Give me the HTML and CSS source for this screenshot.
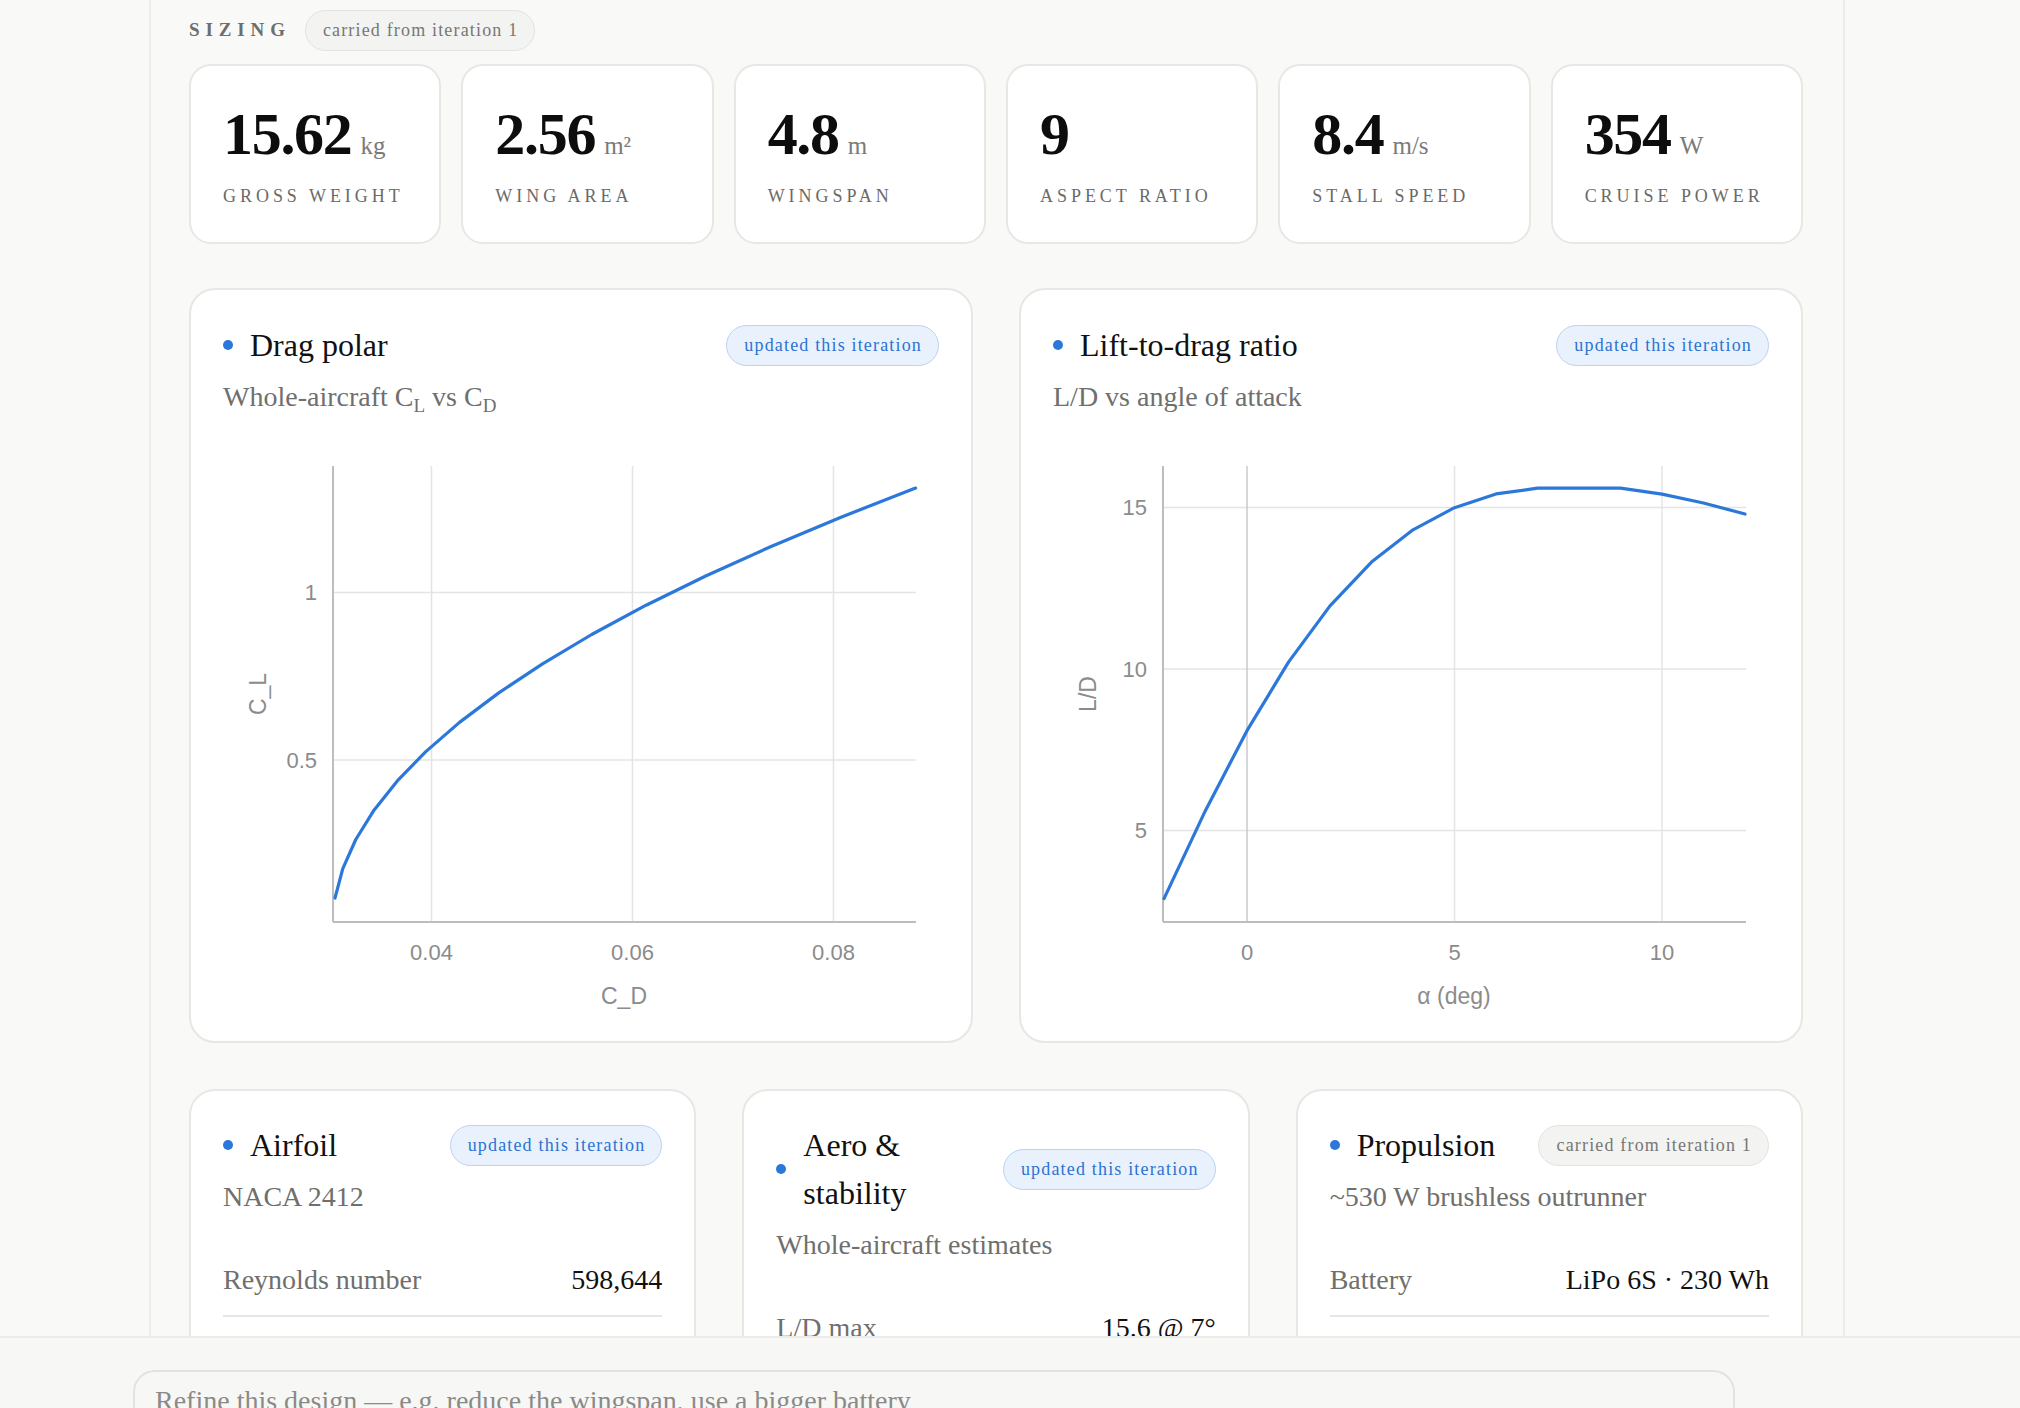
FILE: index.html
```html
<!DOCTYPE html>
<html lang="en">
<head>
<meta charset="utf-8">
<title>Sizing</title>
<link rel="stylesheet" href="styles.css">
</head>
<body>
<main class="page">
  <div class="section-head">
    <span class="section-title">SIZING</span>
    <span class="badge badge-carried">carried from iteration 1</span>
  </div>

  <div class="metrics">
    <div class="metric">
      <div class="metric-value"><span class="num">15.62</span><span class="unit">kg</span></div>
      <div class="metric-label">GROSS WEIGHT</div>
    </div>
    <div class="metric">
      <div class="metric-value"><span class="num">2.56</span><span class="unit">m²</span></div>
      <div class="metric-label">WING AREA</div>
    </div>
    <div class="metric">
      <div class="metric-value"><span class="num">4.8</span><span class="unit">m</span></div>
      <div class="metric-label">WINGSPAN</div>
    </div>
    <div class="metric">
      <div class="metric-value"><span class="num">9</span></div>
      <div class="metric-label">ASPECT RATIO</div>
    </div>
    <div class="metric">
      <div class="metric-value"><span class="num">8.4</span><span class="unit">m/s</span></div>
      <div class="metric-label">STALL SPEED</div>
    </div>
    <div class="metric">
      <div class="metric-value"><span class="num">354</span><span class="unit">W</span></div>
      <div class="metric-label">CRUISE POWER</div>
    </div>
  </div>

  <div class="charts">
    <section class="card">
      <div class="card-head">
        <h3 class="card-title"><span class="dot"></span><span class="title-text">Drag polar</span></h3>
        <span class="badge badge-updated">updated this iteration</span>
      </div>
      <p class="card-sub">Whole-aircraft C<sub>L</sub> vs C<sub>D</sub></p>
      <svg class="chart" viewBox="0 0 715 570" width="715" height="570">
        <g class="grid">
          <line x1="110" y1="152.5" x2="693" y2="152.5"/>
          <line x1="110" y1="320" x2="693" y2="320"/>
          <line x1="208.5" y1="26" x2="208.5" y2="482"/>
          <line x1="409.5" y1="26" x2="409.5" y2="482"/>
          <line x1="610.5" y1="26" x2="610.5" y2="482"/>
        </g>
        <g class="axis">
          <line x1="110" y1="26" x2="110" y2="482"/>
          <line x1="110" y1="482" x2="693" y2="482"/>
        </g>
        <g class="ticks-y">
          <text x="94" y="152.5">1</text>
          <text x="94" y="320">0.5</text>
        </g>
        <g class="ticks-x">
          <text x="208.5" y="512">0.04</text>
          <text x="409.5" y="512">0.06</text>
          <text x="610.5" y="512">0.08</text>
        </g>
        <text class="axis-title" x="401" y="556">C_D</text>
        <text class="axis-title" x="35" y="254" transform="rotate(-90 35 254)">C_L</text>
        <polyline class="series" points="112,458 119.8,428.7 132.8,399.5 151,370.2 174.3,340.9 202.8,311.6 236.5,282.4 275.4,253.1 319.5,223.8 368.7,194.5 423.1,165.2 482.7,136 547.5,106.7 617.4,77.4 692.6,48.1"/>
      </svg>
    </section>

    <section class="card">
      <div class="card-head">
        <h3 class="card-title"><span class="dot"></span><span class="title-text">Lift-to-drag ratio</span></h3>
        <span class="badge badge-updated">updated this iteration</span>
      </div>
      <p class="card-sub">L/D vs angle of attack</p>
      <svg class="chart" viewBox="0 0 715 570" width="715" height="570">
        <g class="grid">
          <line x1="110" y1="67.6" x2="693" y2="67.6"/>
          <line x1="110" y1="229.1" x2="693" y2="229.1"/>
          <line x1="110" y1="390.6" x2="693" y2="390.6"/>
          <line x1="401.5" y1="26" x2="401.5" y2="482"/>
          <line x1="609" y1="26" x2="609" y2="482"/>
        </g>
        <line class="zero" x1="194" y1="26" x2="194" y2="482"/>
        <g class="axis">
          <line x1="110" y1="26" x2="110" y2="482"/>
          <line x1="110" y1="482" x2="693" y2="482"/>
        </g>
        <g class="ticks-y">
          <text x="94" y="67.6">15</text>
          <text x="94" y="229.1">10</text>
          <text x="94" y="390.6">5</text>
        </g>
        <g class="ticks-x">
          <text x="194" y="512">0</text>
          <text x="401.5" y="512">5</text>
          <text x="609" y="512">10</text>
        </g>
        <text class="axis-title" x="401" y="556">α (deg)</text>
        <text class="axis-title" x="35" y="254" transform="rotate(-90 35 254)">L/D</text>
        <polyline class="series" points="111,458.6 152.5,370.4 194,290.7 235.5,222.1 277,165.9 318.5,122.1 360,89.8 401.5,67.7 443,53.9 484.5,48.2 526,48.2 567.5,48.2 609,54.1 650.5,63 692,74"/>
      </svg>
    </section>
  </div>

  <div class="details">
    <section class="card">
      <div class="card-head">
        <h3 class="card-title"><span class="dot"></span><span class="title-text">Airfoil</span></h3>
        <span class="badge badge-updated">updated this iteration</span>
      </div>
      <p class="card-sub">NACA 2412</p>
      <dl class="rows">
        <div class="row"><dt>Reynolds number</dt><dd>598,644</dd></div>
        <div class="row"><dt>Max thickness</dt><dd>12%</dd></div>
      </dl>
    </section>

    <section class="card">
      <div class="card-head">
        <h3 class="card-title"><span class="dot"></span><span class="title-text">Aero &amp; stability</span></h3>
        <span class="badge badge-updated">updated this iteration</span>
      </div>
      <p class="card-sub">Whole-aircraft estimates</p>
      <dl class="rows">
        <div class="row"><dt>L/D max</dt><dd>15.6 @ 7°</dd></div>
        <div class="row"><dt>Static margin</dt><dd>10%</dd></div>
      </dl>
    </section>

    <section class="card">
      <div class="card-head">
        <h3 class="card-title"><span class="dot"></span><span class="title-text">Propulsion</span></h3>
        <span class="badge badge-carried">carried from iteration 1</span>
      </div>
      <p class="card-sub">~530 W brushless outrunner</p>
      <dl class="rows">
        <div class="row"><dt>Battery</dt><dd>LiPo 6S · 230 Wh</dd></div>
        <div class="row"><dt>Endurance</dt><dd>38 min</dd></div>
      </dl>
    </section>
  </div>
</main>

<footer class="composer">
  <div class="composer-input">Refine this design — e.g. reduce the wingspan, use a bigger battery</div>
</footer>
</body>
</html>
```

FILE: styles.css
```css
* { box-sizing: border-box; }

html, body {
  margin: 0;
  padding: 0;
}

body {
  background: #f9f9f7;
  font-family: "Liberation Serif", "Times New Roman", serif;
  color: #111;
  overflow: hidden;
}

.page {
  margin-left: 149px;
  width: 1696px;
  min-height: 1408px;
  border-left: 2px solid #ecece9;
  border-right: 2px solid #ecece9;
  padding: 10px 40px 200px 38px;
}

.section-head {
  display: flex;
  align-items: center;
  gap: 14px;
  height: 40px;
}

.section-title {
  font-size: 19px;
  font-weight: 700;
  letter-spacing: 0.31em;
  color: #6e6e6c;
}

.badge {
  display: inline-block;
  flex-shrink: 0;
  white-space: nowrap;
  font-size: 18px;
  letter-spacing: 0.065em;
  line-height: 23px;
  padding: 8px 16px 8px 17px;
  border-radius: 999px;
  border: 1.5px solid;
}

.badge-carried {
  background: #f3f3f1;
  border-color: #e3e3e0;
  color: #777775;
}

.badge-updated {
  background: #e9f1fc;
  border-color: #bcd3f1;
  color: #2c73d3;
}

.metrics {
  display: grid;
  grid-template-columns: repeat(6, 1fr);
  gap: 20px;
  margin-top: 14px;
}

.metric {
  background: #fff;
  border: 2px solid #e7e7e4;
  border-radius: 22px;
  height: 180px;
  padding: 38px 32px 0;
}

.metric-value {
  display: flex;
  align-items: baseline;
  line-height: 1;
}

.metric-value .num {
  font-size: 60px;
  font-weight: 700;
  letter-spacing: -1.3px;
  color: #0d0d0d;
}

.metric-value .unit {
  font-size: 25px;
  color: #7a7a78;
  margin-left: 9px;
}

.metric-label {
  margin-top: 20px;
  font-size: 18px;
  line-height: 25px;
  letter-spacing: 0.22em;
  color: #6a6a68;
}

.charts {
  display: grid;
  grid-template-columns: 1fr 1fr;
  gap: 46px;
  margin-top: 44px;
}

.details {
  display: grid;
  grid-template-columns: repeat(3, 1fr);
  gap: 46px;
  margin-top: 46px;
}

.card {
  background: #fff;
  border: 2px solid #e7e7e4;
  border-radius: 26px;
  padding: 31px 32px;
}

.details .card {
  padding-top: 30px;
}

.card-head {
  display: flex;
  align-items: center;
  justify-content: space-between;
  gap: 16px;
}

.card-title {
  display: flex;
  align-items: center;
  gap: 17px;
  margin: 0;
  font-size: 32px;
  font-weight: 400;
  line-height: 48px;
  color: #111;
}

.dot {
  flex-shrink: 0;
  width: 10px;
  height: 10px;
  border-radius: 50%;
  background: #2b78da;
}

.card-sub {
  margin: 8px 0 0;
  font-size: 28px;
  line-height: 39px;
  color: #6f6f6d;
}

.card-sub sub {
  font-size: 19px;
  vertical-align: -6px;
  line-height: 0;
}

.chart {
  display: block;
  margin-top: 24px;
  width: 715px;
  height: 570px;
  font-family: "Liberation Sans", Arial, sans-serif;
}

.grid line {
  stroke: #e4e4e4;
  stroke-width: 1.5;
}

.zero {
  stroke: #cacaca;
  stroke-width: 1.5;
}

.axis line {
  stroke: #bdbdbb;
  stroke-width: 2;
}

.ticks-y text {
  font-size: 22px;
  fill: #8b8b8b;
  text-anchor: end;
  dominant-baseline: central;
}

.ticks-x text {
  font-size: 22px;
  fill: #8b8b8b;
  text-anchor: middle;
  dominant-baseline: central;
}

.axis-title {
  font-size: 23px;
  fill: #8b8b8b;
  text-anchor: middle;
  dominant-baseline: central;
}

.series {
  fill: none;
  stroke: #2b78da;
  stroke-width: 3.2;
  stroke-linejoin: round;
  stroke-linecap: round;
}

.rows {
  margin: 28px 0 0;
}

.row {
  display: flex;
  justify-content: space-between;
  align-items: baseline;
  padding: 16px 0;
  border-bottom: 2px solid #e6e6e4;
  font-size: 28px;
  line-height: 39px;
}

.row dt {
  color: #6f6f6d;
}

.row dd {
  margin: 0;
  color: #111;
}

.composer {
  position: fixed;
  left: 0;
  right: 0;
  top: 1336px;
  bottom: 0;
  background: #f7f7f5;
  border-top: 2px solid #ebebe8;
  padding: 32px 0 0 133px;
}

.composer-input {
  width: 1602px;
  height: 120px;
  border: 2px solid #e2e2df;
  border-radius: 22px;
  background: #f7f7f5;
  padding: 9px 20px;
  font-size: 28px;
  line-height: 39px;
  color: #8a8a88;
}
```
